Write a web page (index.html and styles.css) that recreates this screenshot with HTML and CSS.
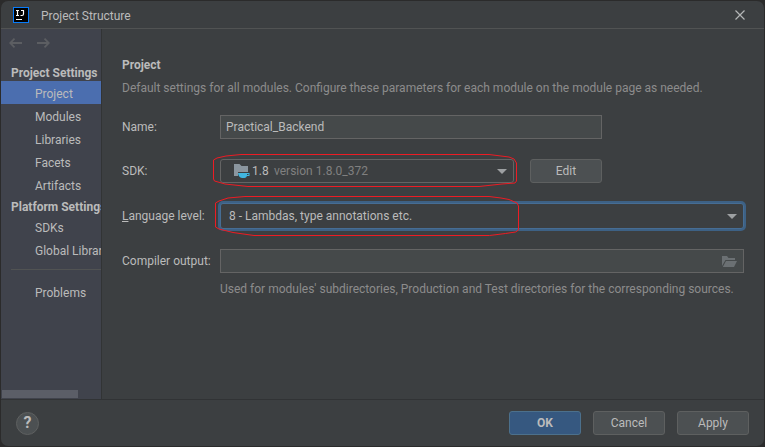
FILE: index.html
```html
<!DOCTYPE html>
<html lang="en">
<head>
<meta charset="utf-8">
<meta name="viewport" content="width=device-width, initial-scale=1">
<title>Project Structure</title>
<link rel="stylesheet" href="styles.css">
</head>
<body>
<div class="dialog">
  <header class="titlebar">
    <svg class="logo" width="16" height="16" viewBox="0 0 16 16" aria-hidden="true">
      <rect width="16" height="16" fill="#087cfa"/>
      <rect x="1" y="1" width="14" height="14" fill="#000"/>
      <path d="M3 3.500h3M4.500 3.500v5M3 8.500h3M8 3.500h3M10.500 3.500v3.500q0 1.500-1.500 1.500h-1.500M3 12.500h6" fill="none" stroke="#fff" stroke-width="1.200"/>
    </svg>
    <h1 class="title">Project Structure</h1>
    <button class="close" type="button" aria-label="Close">
      <svg width="10" height="10" viewBox="0 0 10 10"><path d="M.5.5l9 9M9.500.5l-9 9" stroke="#b4b6b7" stroke-width="1.200"/></svg>
    </button>
  </header>

  <div class="body">
    <nav class="sidebar" aria-label="Settings">
      <div class="history">
        <button type="button" aria-label="Back"><svg width="14" height="10" viewBox="0 0 14 10"><path d="M13 5H1.500M5.500.7L1.200 5l4.300 4.300" fill="none" stroke="#5c5e62" stroke-width="1.800"/></svg></button>
        <button type="button" aria-label="Forward"><svg width="14" height="10" viewBox="0 0 14 10"><path d="M1 5h11.500M8.500.7L12.800 5 8.500 9.300" fill="none" stroke="#5c5e62" stroke-width="1.800"/></svg></button>
      </div>
      <h2 class="group">Project Settings</h2>
      <a class="item selected" href="#project" aria-current="page">Project</a>
      <a class="item" href="#modules">Modules</a>
      <a class="item" href="#libraries">Libraries</a>
      <a class="item" href="#facets">Facets</a>
      <a class="item" href="#artifacts">Artifacts</a>
      <h2 class="group">Platform Settings</h2>
      <a class="item" href="#sdks">SDKs</a>
      <a class="item" href="#global">Global Libraries</a>
      <hr class="divider">
      <a class="item" href="#problems">Problems</a>
      <div class="scrollbar"></div>
    </nav>

    <main class="content" id="project">
      <h2 class="heading">Project</h2>
      <p class="intro">Default settings for all modules. Configure these parameters for each module on the module page as needed.</p>
      <form class="form">
        <label for="name">Name:</label>
        <div class="row"><input class="field medium" id="name" type="text" value="Practical_Backend"></div>

        <label for="sdk">SDK:</label>
        <div class="row">
          <div class="combo sdk">
            <select id="sdk"><option>1.8</option></select>
            <span class="detail">
              <svg width="16" height="14" viewBox="0 0 16 14" aria-hidden="true">
                <path d="M0 0h5.500l2 2H14v6H4v4H0z" fill="#8b969f"/>
                <path d="M4 9h11.500v3h-2.500q-.8 2-2.500 2H8Q4.500 13.500 4 9z" fill="#40b6e0"/>
                <path d="M13 10h1.500v1h-1.500z" fill="#3c3f41"/>
              </svg>
              <span class="version">version 1.8.0_372</span>
            </span>
            <svg class="arrow" width="10" height="5" viewBox="0 0 10 5" aria-hidden="true"><path d="M0 0h10L5 5z" fill="#9da0a2"/></svg>
            <svg class="mark mark-sdk" width="306" height="34" viewBox="0 0 306 34" aria-hidden="true"><path d="M29 1.500H277L289 3l8 1 5 2 2.500 4v18l-1.500 2-13 1-23 2.500H36L13 31 2.500 28 1.500 26V7L5 5l9-2z"/></svg>
          </div>
          <button class="button edit" type="button">Edit</button>
        </div>

        <label for="level"><u>L</u>anguage level:</label>
        <div class="row">
          <div class="combo level">
            <select id="level"><option>8 - Lambdas, type annotations etc.</option></select>
            <svg class="arrow" width="10" height="5" viewBox="0 0 10 5" aria-hidden="true"><path d="M0 0h10L5 5z" fill="#9da0a2"/></svg>
            <svg class="mark mark-level" width="306" height="42" viewBox="0 0 306 42" aria-hidden="true"><path d="M31 1.500H275L287 3l8 1.500 8 3.500 1.500 3v24l-3 2-10 1.500-16 2H40L19 37.500 5 34 1.500 32V8L5 6l9-3z"/></svg>
          </div>
        </div>

        <label for="output">Compiler output:</label>
        <div class="row">
          <div class="path">
            <input class="field" id="output" type="text">
            <button class="browse" type="button" aria-label="Browse">
              <svg width="15" height="12" viewBox="0 0 15 12"><path d="M0 0h5l1.500 2H13v2H3.500L0 10z" fill="#6b7073"/><path d="M4 5h11l-3 6H0.800z" fill="#6b7073"/></svg>
            </button>
          </div>
        </div>
        <p class="hint">Used for modules' subdirectories, Production and Test directories for the corresponding sources.</p>
      </form>
    </main>
  </div>

  <footer class="footer">
    <button class="help" type="button" aria-label="Help">?</button>
    <button class="button primary" type="button">OK</button>
    <button class="button" type="button">Cancel</button>
    <button class="button" type="button">Apply</button>
  </footer>
</div>
</body>
</html>
```
FILE: styles.css
```css
* {
  box-sizing: border-box;
}

body {
  margin: 0;
  padding: 1px;
  min-height: 100vh;
  display: flex;
  background: #2b2b2b;
  color: #bbbbbb;
  font: 12px/20px Roboto, "Noto Sans", sans-serif;
}

button,
input,
select {
  font: inherit;
  color: inherit;
}

h1,
h2,
p {
  margin: 0;
  font-size: inherit;
}

.dialog {
  flex: 1;
  min-width: 0;
  display: flex;
  flex-direction: column;
  background: #3c3f41;
  border-radius: 7px;
  overflow: hidden;
}

.titlebar {
  display: flex;
  align-items: center;
  height: 28px;
  padding: 0 19px 0 12px;
  border-bottom: 1px solid #515353;
}

.title {
  flex: 1;
  padding: 2px 0 0 12px;
  font-weight: 400;
}

.close,
.history button,
.browse {
  display: flex;
  padding: 0;
  border: 0;
  background: none;
}

.body {
  flex: 1;
  display: flex;
}

.sidebar {
  flex: none;
  display: flex;
  flex-direction: column;
  width: 101px;
  padding-top: 9px;
  overflow: hidden;
  white-space: nowrap;
  background: #40434c;
  border-right: 1px solid #323435;
}

.history {
  display: flex;
  gap: 13px;
  padding: 0 8px 14px;
}

.group {
  height: 19px;
  padding-left: 10px;
  font-weight: 700;
  line-height: 22px;
}

.item {
  height: 23px;
  padding-left: 34px;
  line-height: 26px;
  color: inherit;
  text-decoration: none;
}

.selected {
  background: #4b6eaf;
}

.divider {
  width: 90px;
  margin: 8px 0 10px 10px;
  border: 0;
  border-top: 1px solid #515353;
}

.scrollbar {
  width: 76px;
  height: 8px;
  margin: auto 0 1px 1px;
  background: #5b5e67;
}

.content {
  flex: 1;
  min-width: 0;
  padding: 26px 20px 0 20px;
}

.heading {
  font-weight: 700;
}

.intro,
.hint {
  color: #8c8c8c;
}

.intro {
  padding-top: 3px;
}

.form {
  display: grid;
  grid-template-columns: 98px minmax(0, 1fr);
  row-gap: 20px;
  align-items: center;
  margin-top: 17px;
  white-space: nowrap;
}

.row {
  display: flex;
  gap: 16px;
}

.field {
  width: 100%;
  height: 24px;
  padding: 0 5px;
  background: #45494a;
  border: 1px solid #646464;
}

.medium {
  flex: 0 1 382px;
}

.combo {
  position: relative;
  display: flex;
  flex: 1;
  align-items: center;
}

.combo select {
  width: 100%;
  height: 24px;
  padding: 0 24px 0 8px;
  appearance: none;
  background: #3c3f41;
  border: 1px solid #646464;
  border-radius: 3px;
}

.combo.sdk {
  flex: 0 1 294px;
}

.sdk select {
  padding-left: 31px;
}

.level select {
  height: 26px;
  border-color: #466d94;
  box-shadow: 0 0 0 2px #3d6185;
}

.arrow {
  position: absolute;
  right: 7px;
}

.detail {
  position: absolute;
  left: 14px;
  display: flex;
  align-items: center;
  gap: 24px;
  color: #808080;
  pointer-events: none;
}

.mark {
  position: absolute;
  fill: none;
  stroke: #ed1c24;
  pointer-events: none;
}

.mark-sdk {
  top: -6px;
  left: -8px;
}

.mark-level {
  top: -8px;
  left: -6px;
}

.button {
  min-width: 72px;
  height: 24px;
  padding: 0 8px;
  background: #4c5052;
  border: 1px solid #5e6060;
  border-radius: 3px;
  line-height: 22px;
}

.path {
  position: relative;
  flex: 1;
  display: flex;
}

.browse {
  position: absolute;
  top: 7px;
  right: 7px;
}

.hint {
  grid-column: 2;
  margin-top: -14px;
}

.footer {
  display: flex;
  align-items: center;
  gap: 12px;
  height: 47px;
  padding: 0 15px;
  border-top: 1px solid #313335;
}

.help {
  width: 23px;
  height: 23px;
  margin-right: auto;
  padding: 0;
  background: #4c5052;
  border: 1px solid #5e6060;
  border-radius: 50%;
  font-size: 16px;
  font-weight: 700;
  line-height: 20px;
}

.primary {
  background: #365880;
  border-color: #4c708c;
  font-weight: 700;
}
```
